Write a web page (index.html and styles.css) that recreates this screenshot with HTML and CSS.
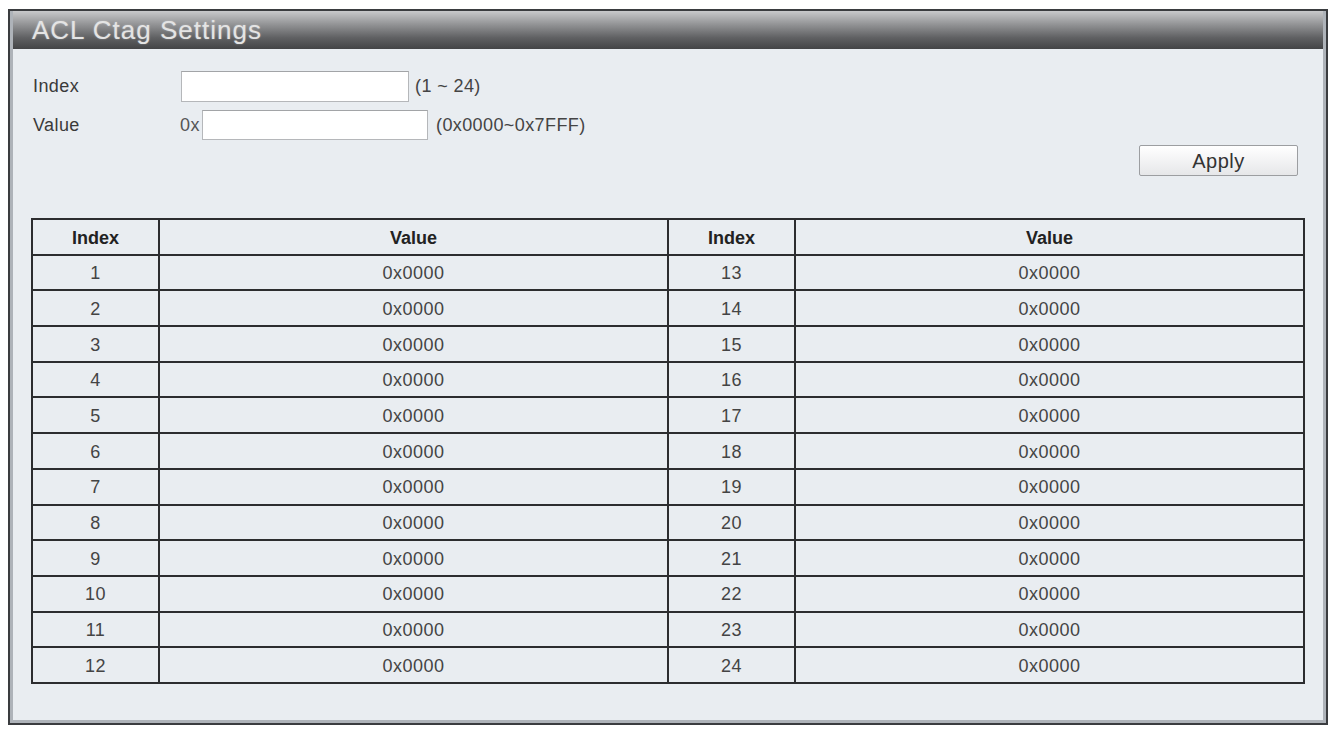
FILE: index.html
```html
<!DOCTYPE html>
<html lang="en">
<head>
    <meta charset="UTF-8">
    <title>ACL Ctag Settings</title>
    <link rel="stylesheet" href="styles.css">
</head>
<body>

<div class="panel">
    <div class="frame">
        <div class="title-bar">ACL Ctag Settings</div>

        <div class="content">
            <!-- Settings form -->
            <div class="form-row first">
                <span class="label">Index</span>
                <input type="text" class="field index-field">
                <span class="hint">(1 ~ 24)</span>
            </div>
            <div class="form-row">
                <span class="label value-label">Value</span>
                <span class="prefix">0x</span>
                <input type="text" class="field value-field">
                <span class="hint hint-wide">(0x0000~0x7FFF)</span>
            </div>

            <div class="actions">
                <button class="apply">Apply</button>
            </div>

            <!-- Ctag table -->
            <table class="ctag-table">
                <colgroup>
                    <col class="col-index">
                    <col class="col-value">
                    <col class="col-index">
                    <col class="col-value">
                </colgroup>
                <thead>
                    <tr><th>Index</th><th>Value</th><th>Index</th><th>Value</th></tr>
                </thead>
                <tbody>
                    <tr><td>1</td><td>0x0000</td><td>13</td><td>0x0000</td></tr>
                    <tr><td>2</td><td>0x0000</td><td>14</td><td>0x0000</td></tr>
                    <tr><td>3</td><td>0x0000</td><td>15</td><td>0x0000</td></tr>
                    <tr><td>4</td><td>0x0000</td><td>16</td><td>0x0000</td></tr>
                    <tr><td>5</td><td>0x0000</td><td>17</td><td>0x0000</td></tr>
                    <tr><td>6</td><td>0x0000</td><td>18</td><td>0x0000</td></tr>
                    <tr><td>7</td><td>0x0000</td><td>19</td><td>0x0000</td></tr>
                    <tr><td>8</td><td>0x0000</td><td>20</td><td>0x0000</td></tr>
                    <tr><td>9</td><td>0x0000</td><td>21</td><td>0x0000</td></tr>
                    <tr><td>10</td><td>0x0000</td><td>22</td><td>0x0000</td></tr>
                    <tr><td>11</td><td>0x0000</td><td>23</td><td>0x0000</td></tr>
                    <tr><td>12</td><td>0x0000</td><td>24</td><td>0x0000</td></tr>
                </tbody>
            </table>
        </div>
    </div>
</div>

</body>
</html>
```

FILE: styles.css
```css
/* Page */
body {
    margin: 0;
    background: #ffffff;
    font-family: "Liberation Sans", Arial, sans-serif;
    color: #3a3a3a;
}

/* Outer panel with double border */
.panel {
    margin: 9px 4px 0 8px;
    width: 1316px;
    border: 2px solid #3a3c3f;
    background: #e9edf1;
}

.frame {
    border: 3px solid #aeb3b9;
    border-top: 0;
    height: 712px;
    box-sizing: border-box;
}

/* Title bar */
.title-bar {
    height: 38px;
    line-height: 38px;
    padding-left: 19px;
    background: linear-gradient(to bottom, #c8c9cb 0%, #939496 35%, #606163 70%, #434446 100%);
    color: #e4e4e4;
    font-size: 26px;
    letter-spacing: 1px;
    text-shadow: 0 0 2px rgba(255, 255, 255, 0.35);
}

.content {
    padding: 22px 22px 0 18px;
}

/* Form rows */
.form-row {
    display: flex;
    align-items: center;
    font-size: 18px;
    letter-spacing: 0.4px;
    height: 30px;
    margin-top: 8px;
}

.form-row.first {
    margin-top: 0;
    height: 31px;
}

.label {
    width: 148px;
    padding-left: 2px;
}

.value-label {
    width: 147px;
}

.prefix {
    width: 22px;
    color: #555;
}

.field {
    box-sizing: border-box;
    height: 100%;
    border: 1px solid #b5b7ba;
    border-top-color: #a2a4a7;
    background: #ffffff;
    margin: 0;
    padding: 0;
}

.index-field {
    width: 228px;
}

.value-field {
    width: 226px;
}

.hint {
    margin-left: 6px;
    color: #444;
}

.hint-wide {
    margin-left: 8px;
}

/* Apply button */
.actions {
    display: flex;
    justify-content: flex-end;
    margin-top: 5px;
    padding-right: 3px;
}

.apply {
    width: 159px;
    height: 31px;
    background: linear-gradient(to bottom, #ffffff, #e6e7e9);
    border: 1px solid #9c9ea1;
    border-radius: 2px;
    font-family: "Liberation Sans", Arial, sans-serif;
    font-size: 20px;
    letter-spacing: 0.5px;
    color: #333;
    padding: 2px 0 0 0;
}

/* Ctag table */
.ctag-table {
    margin-top: 42px;
    width: 1274px;
    border-collapse: collapse;
    font-size: 18px;
    letter-spacing: 0.5px;
    color: #444;
}

.col-index {
    width: 127px;
}

.ctag-table th,
.ctag-table td {
    border: 2px solid #2c2d2f;
    text-align: center;
    height: 31.2px;
    padding: 2.5px 0 0 0;
}

.ctag-table th {
    color: #222;
    font-weight: bold;
    letter-spacing: 0;
}
```
